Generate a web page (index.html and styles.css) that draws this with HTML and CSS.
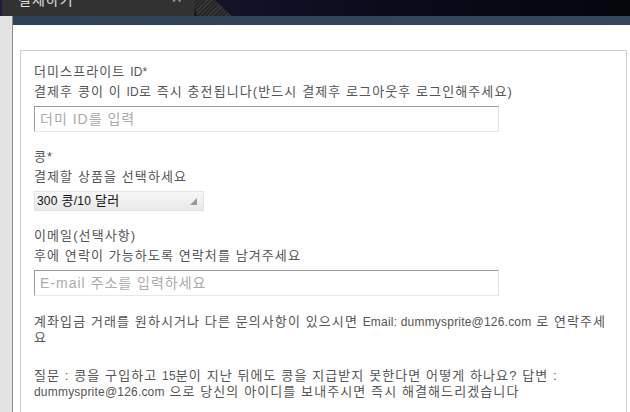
FILE: index.html
```html
<!DOCTYPE html>
<html lang="ko">
<head>
  <meta charset="UTF-8">
  <title>콩 충전</title>
  <link rel="stylesheet" href="styles.css">
</head>
<body>
  <div class="tabbar">
    <div class="tab">
      <span class="tab-title">결제하기</span>
      <span class="tab-close">×</span>
    </div>
    <div class="tab-edge"></div>
    <span class="tab-new">+</span>
  </div>

  <div class="page">
    <div class="sidebar"></div>
    <div class="main">
      <div class="band"></div>
      <div class="content">
        <div class="box">
          <div class="field">
            <div class="label">더미스프라이트 <span class="en">ID*</span></div>
            <div class="hint">결제후 콩이 이 <span class="en">ID</span>로 즉시 충전됩니다(반드시 결제후 로그아웃후 로그인해주세요)</div>
            <input type="text" class="text-input" placeholder="더미 ID를 입력">
          </div>

          <div class="field">
            <div class="label">콩*</div>
            <div class="hint">결제할 상품을 선택하세요</div>
            <div class="select">
              <span><span class="en">300</span> 콩<span class="en">/10</span> 달러</span>
              <svg width="7" height="7" viewBox="0 0 7 7"><path d="M7 0 L7 7 L0 7 Z" fill="#9a9a9a"/></svg>
            </div>
          </div>

          <div class="field">
            <div class="label">이메일(선택사항)</div>
            <div class="hint">후에 연락이 가능하도록 연락처를 남겨주세요</div>
            <input type="text" class="text-input email" placeholder="E-mail 주소를 입력하세요">
          </div>

          <p class="note">계좌입금 거래를 원하시거나 다른 문의사항이 있으시면 <span class="en">Email: dummysprite@126.com</span> 로 연락주세요</p>

          <p class="note faq">질문 : 콩을 구입하고 <span class="en">15</span>분이 지난 뒤에도 콩을 지급받지 못한다면 어떻게 하나요? 답변 : <span class="en">dummysprite@126.com</span> 으로 당신의 아이디를 보내주시면 즉시 해결해드리겠습니다</p>
        </div>
      </div>
    </div>
  </div>
</body>
</html>
```

FILE: styles.css
```css
body {
  margin: 0;
  height: 412px;
  overflow: hidden;
  background: #fff;
  font-family: "Liberation Sans", "Noto Sans CJK KR", sans-serif;
  color: #555;
}

.tabbar {
  display: flex;
  height: 16px;
  overflow: hidden;
  background: linear-gradient(to right, #1d1d3d, #0b0b1c 60%, #05050c);
}

.tab {
  display: flex;
  justify-content: space-between;
  width: 194px;
  margin-left: 2px;
  background: #323232;
  clip-path: polygon(0 0, 100% 0, 99% 100%, 0 100%);
}

.tab-title {
  margin: -10px 0 0 16px;
  font-size: 14px;
  line-height: 20px;
  color: #e0e0e0;
  letter-spacing: 1px;
}

.tab-close {
  margin: -12px 14px 0 0;
  font-size: 18px;
  line-height: 20px;
  color: #aaa;
}

.tab-edge {
  width: 38px;
  margin-left: -2px;
  background: repeating-linear-gradient(135deg, #3a3a3a 0 1px, #262626 1px 3px);
  clip-path: polygon(0 0, 55% 0, 100% 100%, 8% 100%);
}

.tab-new {
  margin: -12px 0 0 -24px;
  font-size: 16px;
  line-height: 20px;
  color: #888;
}

.page {
  display: flex;
  height: 396px;
}

.sidebar {
  width: 12px;
  background: #e3e3e3;
  border-right: 1px solid #8a8a8a;
}

.main {
  flex: 1;
}

.band {
  height: 9px;
  background: linear-gradient(to right, #2c4257, #33485d);
}

.content {
  padding: 25px 3px 0 7px;
}

.box {
  border: 1px solid #cfcfcf;
  padding: 11px 18px 0 13px;
  height: 400px;
  font-size: 13px;
  letter-spacing: 1.1px;
}

.en {
  font-size: 12px;
  letter-spacing: 0.2px;
}

.field {
  margin-bottom: 15px;
}

.label,
.hint {
  line-height: 20px;
}

.text-input {
  display: block;
  box-sizing: border-box;
  width: 465px;
  height: 26px;
  margin-top: 4px;
  padding: 0 5px;
  border: 1px solid;
  border-color: #9c9c9c #e2e2e2 #e8e8e8 #9c9c9c;
  font-family: inherit;
  font-size: 14px;
  letter-spacing: 1px;
  color: #333;
}

.text-input::placeholder {
  color: #ababab;
}

.select {
  display: flex;
  justify-content: space-between;
  align-items: flex-end;
  box-sizing: border-box;
  width: 170px;
  height: 20px;
  margin-top: 4px;
  padding: 0 6px 5px 2px;
  background: linear-gradient(#f6f6f6, #e9e9e9);
  border: 1px solid #e2e2e2;
  color: #111;
  letter-spacing: 0.3px;
}

.select span {
  line-height: 14px;
  margin-bottom: -3px;
}

.select .en {
  margin-bottom: 0;
}

.note {
  margin: 18px 0 0;
  line-height: 16px;
}

.faq {
  margin-top: 22px;
}
```
